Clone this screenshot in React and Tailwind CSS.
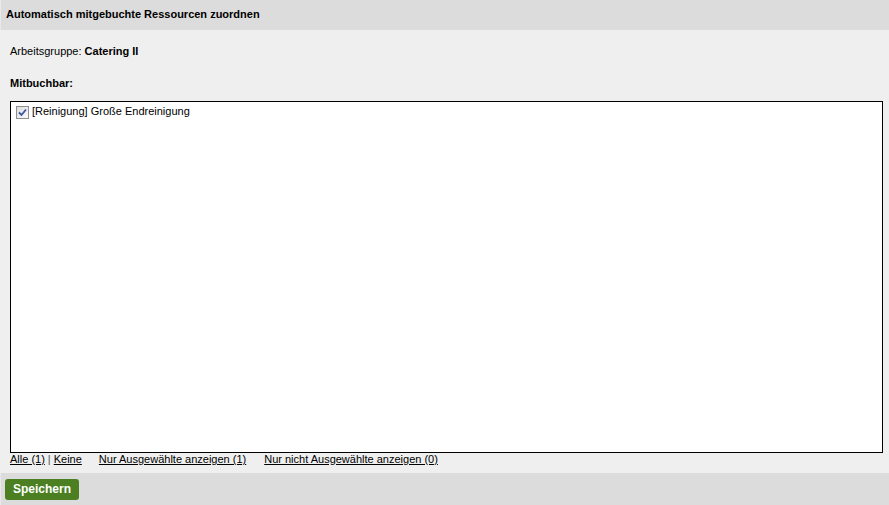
export default function App() {
  return (
    <div
      className="w-[889px] h-[505px] bg-[#efefef] flex flex-col text-[11px] text-black"
      style={{ fontFamily: '"Liberation Sans", Arial, sans-serif' }}
    >
      <div className="h-[30px] bg-[#dcdcdc] border-l border-[#e9e9e9] flex items-center px-[5px] pb-[2px] font-bold text-[11px]">
        Automatisch mitgebuchte Ressourcen zuordnen
      </div>
      <div className="flex-1 flex flex-col px-[10px] pr-[6px]">
        <div className="mt-[15px] leading-[13px]">
          Arbeitsgruppe: <b>Catering II</b>
        </div>
        <div className="mt-[19px] font-bold leading-[13px]">Mitbuchbar:</div>
        <div className="mt-[11px] h-[352px] bg-white border border-black px-[5px] pt-[4px]">
          <label className="flex items-center gap-[3px] leading-[13px]">
            <span className="w-[13px] h-[13px] border border-[#8e8f8f] bg-gradient-to-br from-[#dcdcdc] to-[#fbfbfb] flex items-center justify-center">
              <svg width="9" height="9" viewBox="0 0 9 9">
                <path d="M1 4.5 L3.5 7 L8 1.5" fill="none" stroke="#3b55a6" strokeWidth="1.8" />
              </svg>
            </span>
            <span className="-mt-[2px]">[Reinigung] Große Endreinigung</span>
          </label>
        </div>
        <div className="flex leading-[13px]">
          <a href="#" className="underline">Alle (1)</a>
          <span className="text-[#555] mx-[3px]">|</span>
          <a href="#" className="underline">Keine</a>
          <a href="#" className="underline ml-[17px]">Nur Ausgewählte anzeigen (1)</a>
          <a href="#" className="underline ml-[18px]">Nur nicht Ausgewählte anzeigen (0)</a>
        </div>
      </div>
      <div className="h-[32px] bg-[#dcdcdc] border-l border-[#e9e9e9] flex items-center px-[4px]">
        <button className="h-[21px] px-[8px] rounded-[3px] bg-[#4b7f22] text-white font-bold text-[12px]">
          Speichern
        </button>
      </div>
    </div>
  );
}
